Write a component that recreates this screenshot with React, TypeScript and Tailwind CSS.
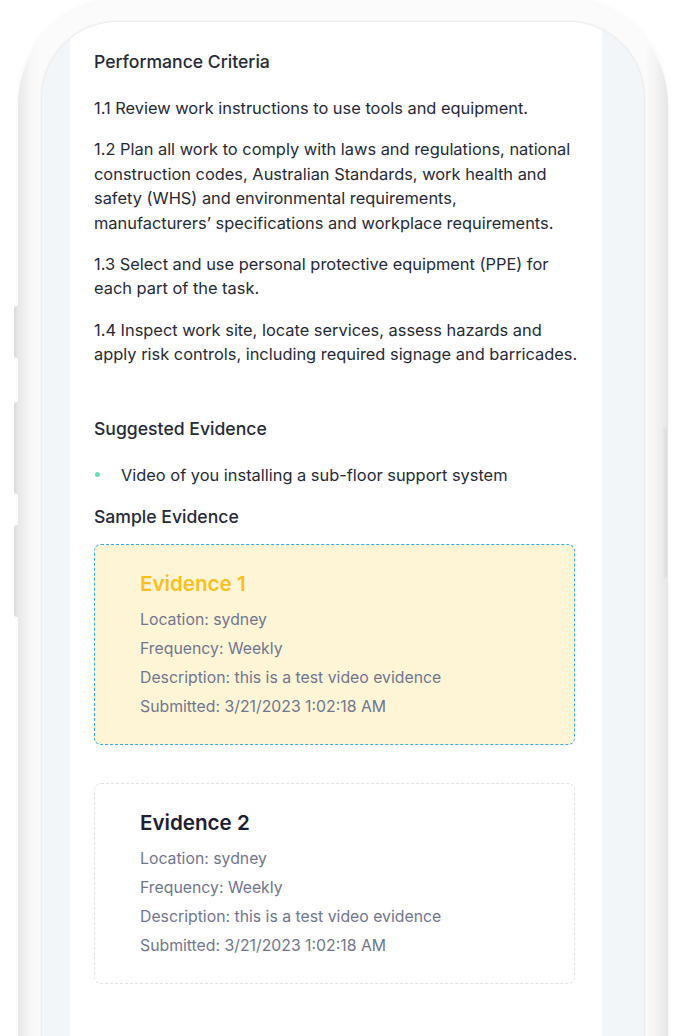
import React from 'react';

type Evidence = {
  title: string;
  location: string;
  frequency: string;
  description: string;
  submitted: string;
  highlighted?: boolean;
};

const criteria = [
  '1.1 Review work instructions to use tools and equipment.',
  '1.2 Plan all work to comply with laws and regulations, national construction codes, Australian Standards, work health and safety (WHS) and environmental requirements, manufacturers’\u00A0specifications and workplace requirements.',
  '1.3 Select and use personal protective equipment (PPE) for each part of the task.',
  '1.4 Inspect work site, locate services, assess hazards and apply risk controls, including required signage and barricades.',
];

const evidence: Evidence[] = [
  {
    title: 'Evidence 1',
    location: 'sydney',
    frequency: 'Weekly',
    description: 'this is a test video evidence',
    submitted: '3/21/2023 1:02:18 AM',
    highlighted: true,
  },
  {
    title: 'Evidence 2',
    location: 'sydney',
    frequency: 'Weekly',
    description: 'this is a test video evidence',
    submitted: '3/21/2023 1:02:18 AM',
  },
];

const EvidenceCard = ({ item }: { item: Evidence }) => (
  <div
    className={
      item.highlighted
        ? 'w-[481px] rounded-[7px] border border-dashed border-[#3aa8ec] bg-[#fef5d7] pl-[45px] pt-[25px] pb-[23px]'
        : 'w-[481px] rounded-[7px] border border-dashed border-[#dfe1e8] bg-white pl-[45px] pt-[25px] pb-[23px]'
    }
  >
    <h4
      className={
        item.highlighted
          ? 'text-[20.6px] leading-[28px] font-semibold text-[#fbbf1f]'
          : 'text-[20.6px] leading-[28px] font-semibold text-[#1d2033]'
      }
    >
      {item.title}
    </h4>
    <div className="mt-[7px] text-[15.8px] leading-[29px] text-[#71758f]">
      <p>Location: {item.location}</p>
      <p>Frequency: {item.frequency}</p>
      <p>Description: {item.description}</p>
      <p>Submitted: {item.submitted}</p>
    </div>
  </div>
);

export default function App() {
  return (
    <div
      className="relative h-[1036px] w-[688px] overflow-hidden bg-white"
      style={{ fontFamily: 'Inter, "Noto Sans", sans-serif' }}
    >
      {/* side buttons */}
      <div className="absolute left-[14px] top-[306px] h-[52px] w-[5px] rounded-l-[3px] bg-gradient-to-r from-[#d9d9d9] to-[#ececec]" />
      <div className="absolute left-[14px] top-[402px] h-[92px] w-[5px] rounded-l-[3px] bg-gradient-to-r from-[#d9d9d9] to-[#ececec]" />
      <div className="absolute left-[14px] top-[525px] h-[92px] w-[5px] rounded-l-[3px] bg-gradient-to-r from-[#d9d9d9] to-[#ececec]" />
      <div className="absolute left-[662px] top-[428px] h-[150px] w-[5px] rounded-r-[3px] bg-gradient-to-l from-[#d9d9d9] to-[#ececec]" />

      {/* phone frame */}
      <div className="ml-[18px] w-[650px] rounded-t-[104px] bg-[linear-gradient(to_right,#e8e8e8,#f7f7f7_2%,#fbfbfb_3.5%,#fbfbfb_96.5%,#f4f4f4_98%,#e6e6e6)] px-[24px] pt-[22px] shadow-[0_-2px_6px_rgba(0,0,0,0.04)]">
        <div className="h-[1020px] overflow-hidden rounded-t-[76px] bg-[#f3f6f9] pl-[28px] pr-[42px] shadow-[0_0_2px_1px_rgba(0,0,0,0.08)]">
          <div className="h-full bg-white pl-[24px] pr-[23px] pt-[28px] text-[#262a38]">
            <h3 className="text-[17.6px] leading-[24px] font-medium">Performance Criteria</h3>

            <div className="mt-[22px] flex flex-col gap-[17px] text-[16.4px] leading-[24.4px]">
              {criteria.map((c) => (
                <p key={c}>{c}</p>
              ))}
            </div>

            <h3 className="mt-[50px] text-[17.6px] leading-[24px] font-medium">Suggested Evidence</h3>
            <ul className="mt-[22px] text-[16.4px] leading-[24.4px]">
              <li className="flex items-center">
                <span className="ml-[1px] mr-[21px] h-[5px] w-[5px] rounded-full bg-[#64e0b4]" />
                Video of you installing a sub-floor support system
              </li>
            </ul>

            <h3 className="mt-[18px] text-[17.6px] leading-[24px] font-medium">Sample Evidence</h3>
            <div className="mt-[15px] flex flex-col gap-[38px]">
              {evidence.map((e) => (
                <EvidenceCard key={e.title} item={e} />
              ))}
            </div>
          </div>
        </div>
      </div>
    </div>
  );
}
